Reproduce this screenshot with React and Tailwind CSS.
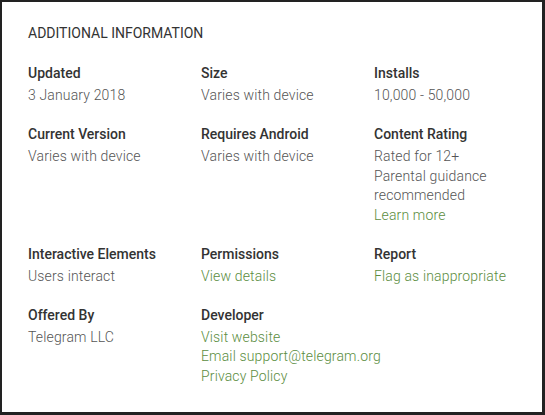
import React from "react";

const link = "text-[#5b8d3e]";

const rows = [
  [
    { label: "Updated", values: [{ text: "3 January 2018" }] },
    { label: "Size", values: [{ text: "Varies with device" }] },
    { label: "Installs", values: [{ text: "10,000 - 50,000" }] },
  ],
  [
    { label: "Current Version", values: [{ text: "Varies with device" }] },
    { label: "Requires Android", values: [{ text: "Varies with device" }] },
    {
      label: "Content Rating",
      values: [
        { text: "Rated for 12+" },
        { text: "Parental guidance" },
        { text: "recommended" },
        { text: "Learn more", link: true },
      ],
    },
  ],
  [
    { label: "Interactive Elements", values: [{ text: "Users interact" }] },
    { label: "Permissions", values: [{ text: "View details", link: true }] },
    { label: "Report", values: [{ text: "Flag as inappropriate", link: true }] },
  ],
  [
    { label: "Offered By", values: [{ text: "Telegram LLC" }] },
    {
      label: "Developer",
      values: [
        { text: "Visit website", link: true },
        { text: "Email support@telegram.org", link: true },
        { text: "Privacy Policy", link: true },
      ],
    },
  ],
];

function InfoItem({ item }) {
  return (
    <div className="flex flex-col">
      <div className="text-[14px] leading-[20px] font-medium text-[#333333]">
        {item.label}
      </div>
      <div className="mt-[3px] flex flex-col">
        {item.values.map((v, i) => (
          <span
            key={i}
            className={`text-[14px] leading-[19.6px] font-light tracking-[0.15px] whitespace-nowrap ${v.link ? link : "text-[#555555]"}`}
          >
            {v.text}
          </span>
        ))}
      </div>
    </div>
  );
}

export default function App() {
  return (
    <div
      className="w-[545px] h-[415px] bg-white border-t-2 border-l-2 border-r-[3px] border-b-[3px] border-[#222222] pl-[26px] pt-[21px]"
      style={{ fontFamily: "Roboto, 'Liberation Sans', sans-serif" }}
    >
      <h2 className="text-[14px] leading-[20px] uppercase text-[#333333] font-normal">
        Additional Information
      </h2>
      <div className="mt-[20px] flex flex-col gap-[18.4px]">
        {rows.map((row, r) => (
          <div key={r} className="grid grid-cols-[173px_173px_173px]">
            {row.map((item) => (
              <InfoItem key={item.label} item={item} />
            ))}
          </div>
        ))}
      </div>
    </div>
  );
}
